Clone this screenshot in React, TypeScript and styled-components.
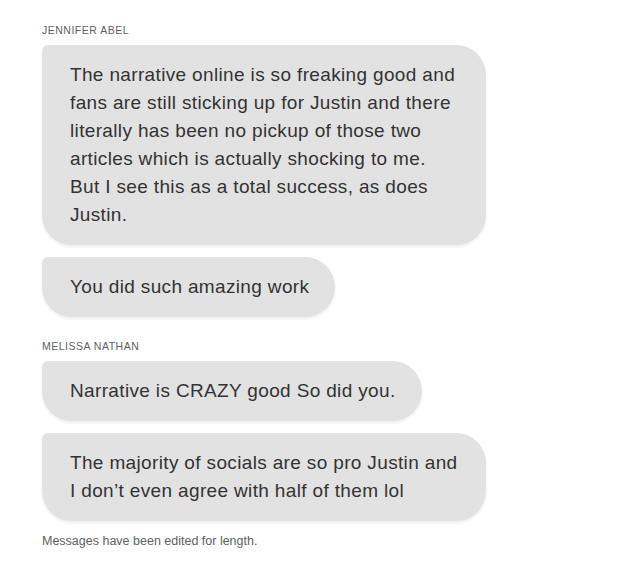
import React from "react";
import styled, { createGlobalStyle } from "styled-components";

const Global = createGlobalStyle`
  html, body { margin: 0; padding: 0; background: #ffffff; }
  body { font-family: "Liberation Sans", Arial, sans-serif; }
`;

const Page = styled.div`
  display: flex;
  flex-direction: column;
  gap: 13px;
  padding: 24px 0 0 42px;
  width: 638px;
  box-sizing: border-box;
`;

const Thread = styled.div`
  display: flex;
  flex-direction: column;
  gap: 23px;
`;

const Group = styled.section`
  display: flex;
  flex-direction: column;
  align-items: flex-start;
  gap: 12px;
`;

const Sender = styled.div`
  font-family: "Liberation Sans", Arial, sans-serif;
  font-size: 10.5px;
  font-weight: 400;
  letter-spacing: 0.5px;
  color: #5f5f5f;
  text-transform: uppercase;
  line-height: 12px;
  margin-bottom: -3px;
`;

const Bubble = styled.div`
  box-sizing: border-box;
  max-width: 444px;
  background: #e2e2e2;
  color: #333333;
  font-family: "Liberation Sans", Arial, sans-serif;
  font-size: 19px;
  letter-spacing: 0.35px;
  line-height: 28px;
  padding: 16px 26px 16px 28px;
  border-radius: 6px 30px 30px 30px;
  box-shadow: 0 2px 3px rgba(0, 0, 0, 0.07);
`;

const Note = styled.p`
  margin: 0;
  font-family: "Liberation Sans", Arial, sans-serif;
  font-size: 12.5px;
  line-height: 14px;
  color: #616161;
`;

const conversation = [
  {
    sender: "Jennifer Abel",
    messages: [
      "The narrative online is so freaking good and fans are still sticking up for Justin and there literally has been no pickup of those two articles which is actually shocking to me. But I see this as a total success, as does Justin.",
      "You did such amazing work",
    ],
  },
  {
    sender: "Melissa Nathan",
    messages: [
      "Narrative is CRAZY good So did you.",
      "The majority of socials are so pro Justin and I don\u2019t even agree with half of them lol",
    ],
  },
];

export default function App() {
  return (
    <>
      <Global />
      <Page>
        <Thread>
          {conversation.map((g) => (
            <Group key={g.sender}>
              <Sender>{g.sender}</Sender>
              {g.messages.map((m) => (
                <Bubble key={m}>{m}</Bubble>
              ))}
            </Group>
          ))}
        </Thread>
        <Note>Messages have been edited for length.</Note>
      </Page>
    </>
  );
}
